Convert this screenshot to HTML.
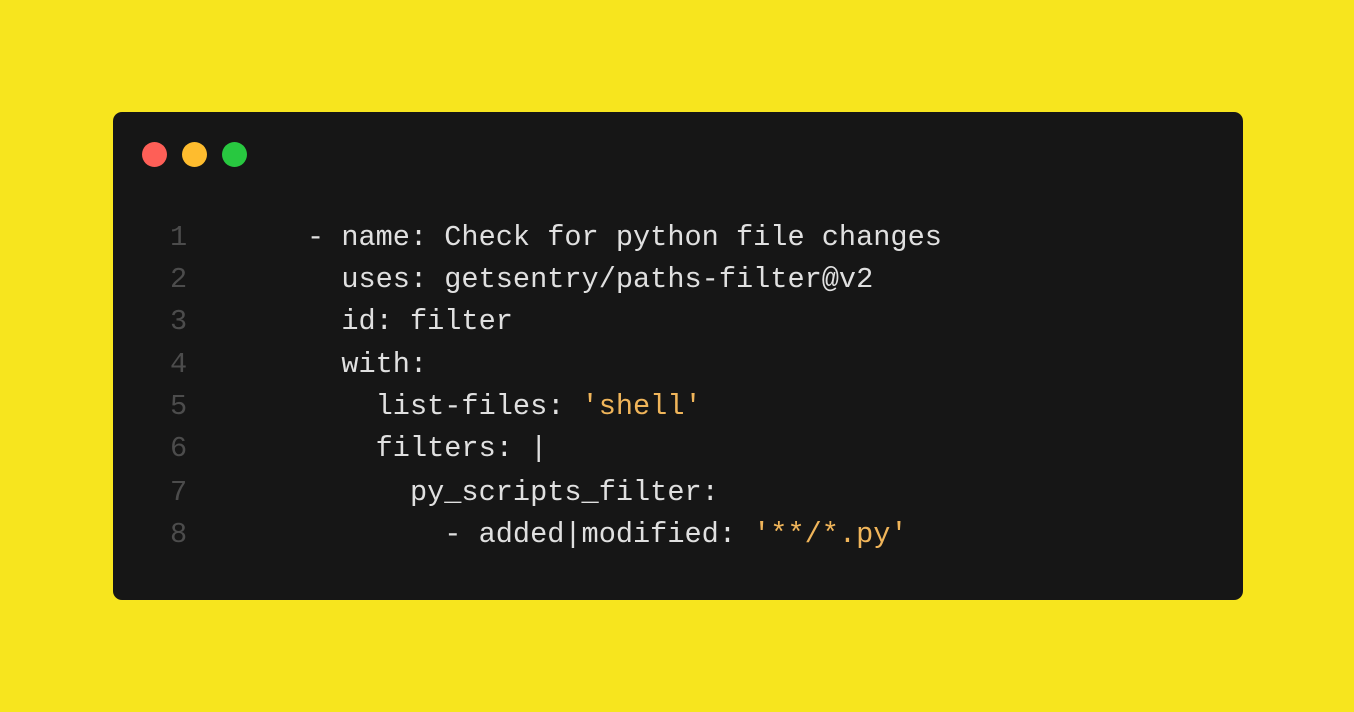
<!DOCTYPE html>
<html><head><meta charset="utf-8"><style>
html,body{margin:0;padding:0}
body{width:1354px;height:712px;background:#f7e51e;position:relative;overflow:hidden;font-family:"Liberation Mono",monospace}
.card{position:absolute;left:113px;top:112px;width:1130px;height:488px;background:#161616;border-radius:9px}
.dot{position:absolute;top:142px;width:25px;height:25px;border-radius:50%}
.line{position:absolute;left:0;height:42px;line-height:42px;font-size:28.6px;color:#e0e0e0;white-space:pre}
.n{position:absolute;left:170px;color:#4c4c4c}
.c{position:absolute;left:307px}
.s{color:#f0b55a}
</style></head><body>
<div class="card"></div>
<div class="dot" style="left:142px;background:#fe5f57"></div>
<div class="dot" style="left:182px;background:#febc2e"></div>
<div class="dot" style="left:222px;background:#28c840"></div>
<div class="line" style="top:217px"><span class="n">1</span><span class="c">- name: Check for python file changes</span></div>
<div class="line" style="top:259px"><span class="n">2</span><span class="c">  uses: getsentry/paths-filter@v2</span></div>
<div class="line" style="top:301px"><span class="n">3</span><span class="c">  id: filter</span></div>
<div class="line" style="top:344px"><span class="n">4</span><span class="c">  with:</span></div>
<div class="line" style="top:386px"><span class="n">5</span><span class="c">    list-files: <span class="s">'shell'</span></span></div>
<div class="line" style="top:428px"><span class="n">6</span><span class="c">    filters: |</span></div>
<div class="line" style="top:472px"><span class="n">7</span><span class="c">      py_scripts_filter:</span></div>
<div class="line" style="top:514px"><span class="n">8</span><span class="c">        - added|modified: <span class="s">'**/*.py'</span></span></div>
</body></html>
